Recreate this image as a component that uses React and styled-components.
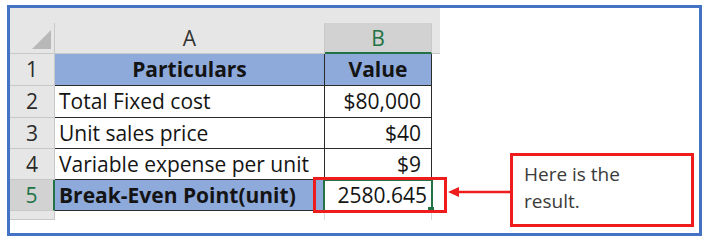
import React from "react";
import styled, { createGlobalStyle } from "styled-components";

const GREEN = "#217346";
const HEAD = "#e6e6e6";
const HEAD_SEL = "#d2d2d2";
const HEAD_LINE = "#c8c8c8";
const GRID_DARK = "#2b2b2b";
const INK = "#141414";
const BLUE_FILL = "#8eaadb";
const RED = "#ee1c1c";
const FRAME_BLUE = "#4472c4";

const Global = createGlobalStyle`
  html, body { margin: 0; padding: 0; background: #fff; }
  body { font-family: "Open Sans", "Liberation Sans", sans-serif; }
  *, *::before, *::after { box-sizing: border-box; }
`;

const Frame = styled.div`
  margin: 5px 0 0 7px;
  width: 695px;
  height: 231px;
  border: 3px solid ${FRAME_BLUE};
  display: flex;
  align-items: flex-start;
`;

const Sheet = styled.div`
  display: grid;
  grid-template-columns: 45px 270px 107px 8px;
  grid-template-rows: 15px 31px 32px 32px 31px 31px 31px 9px;
  font-size: 21px;
  line-height: 1;
`;

const TopStrip = styled.div`
  grid-column: 1 / -1;
  background: ${HEAD};
`;

const Corner = styled.div`
  background: ${HEAD};
  border-right: 1px solid ${HEAD_LINE};
  border-bottom: 1px solid ${HEAD_LINE};
  display: flex;
  justify-content: flex-end;
  align-items: flex-end;
  padding: 0 3px 4px 0;
`;

const ColHeader = styled.div`
  background: ${(p) => (p.$selected ? HEAD_SEL : HEAD)};
  color: ${(p) => (p.$selected ? GREEN : "#333")};
  border-right: 1px solid ${HEAD_LINE};
  border-bottom: ${(p) => (p.$selected ? `2px solid ${GREEN}` : `1px solid ${HEAD_LINE}`)};
  display: flex;
  align-items: center;
  justify-content: center;
  padding-top: ${(p) => (p.$selected ? "1px" : "0")};
`;

const HeaderFiller = styled.div`
  background: ${HEAD};
  border-bottom: 1px solid ${HEAD_LINE};
`;

const RowHeader = styled.div`
  background: ${(p) => (p.$selected ? HEAD_SEL : HEAD)};
  color: ${(p) => (p.$selected ? GREEN : "#2a2a2a")};
  border-right: ${(p) => (p.$selected ? `2px solid ${GREEN}` : `1px solid ${HEAD_LINE}`)};
  border-bottom: 1px solid ${HEAD_LINE};
  display: flex;
  align-items: center;
  justify-content: center;
`;

const Cell = styled.div`
  position: relative;
  display: flex;
  align-items: center;
  justify-content: ${(p) =>
    p.$align === "center" ? "center" : p.$align === "right" ? "flex-end" : "flex-start"};
  padding: 0 ${(p) => p.$padRight}px 0 4px;
  background: ${(p) => (p.$fill ? BLUE_FILL : "#fff")};
  font-weight: ${(p) => (p.$bold ? 700 : 400)};
  color: ${INK};
  border-right: 1px solid ${GRID_DARK};
  border-bottom: 1px solid ${GRID_DARK};
  white-space: nowrap;
`;

const EmptyCell = styled.div`
  background: #fff;
  border-right: ${(p) => (p.$line ? "1px solid #d9d9d9" : "none")};
`;

const Selection = styled.div`
  position: absolute;
  top: -1px;
  left: -2px;
  right: -2px;
  bottom: -2px;
  border: 2px solid ${GREEN};
  pointer-events: none;
`;

const FillHandle = styled.div`
  position: absolute;
  right: -3px;
  bottom: -2px;
  width: 6px;
  height: 5px;
  background: ${GREEN};
`;

const Highlight = styled.div`
  position: absolute;
  top: -3px;
  left: -12px;
  right: -16px;
  bottom: -3px;
  border: 3px solid ${RED};
  pointer-events: none;
`;

const Annotation = styled.div`
  margin: 145px 0 0 8px;
  display: flex;
  align-items: center;
`;

const Arrow = styled.svg`
  display: block;
  margin-top: 4px;
`;

const Callout = styled.div`
  width: 184px;
  height: 74px;
  border: 3px solid ${RED};
  padding: 5px 0 0 11px;
  font-size: 19px;
  line-height: 27px;
  color: #3a3a3a;
`;

const rows = [
  { n: 1, a: "Particulars", b: "Value", title: true },
  { n: 2, a: "Total Fixed cost", b: "$80,000" },
  { n: 3, a: "Unit sales price", b: "$40" },
  { n: 4, a: "Variable expense per unit", b: "$9" },
  { n: 5, a: "Break-Even Point(unit)", b: "2580.645", result: true },
];

export default function App() {
  return (
    <>
      <Global />
      <Frame>
        <Sheet>
          <TopStrip />
          <Corner>
            <svg width="19" height="19" viewBox="0 0 19 19">
              <polygon points="19,0 19,19 0,19" fill="#b8b8b8" />
            </svg>
          </Corner>
          <ColHeader>A</ColHeader>
          <ColHeader $selected>B</ColHeader>
          <HeaderFiller />
          {rows.map((r) => (
            <React.Fragment key={r.n}>
              <RowHeader $selected={r.result}>{r.n}</RowHeader>
              <Cell
                $fill={r.title || r.result}
                $bold={r.title || r.result}
                $align={r.title ? "center" : "left"}
                $padRight={4}
              >
                {r.a}
              </Cell>
              <Cell
                $fill={r.title}
                $bold={r.title}
                $align={r.title ? "center" : "right"}
                $padRight={r.title ? 4 : r.result ? 4 : 10}
              >
                {r.b}
                {r.result && (
                  <>
                    <Selection />
                    <FillHandle />
                    <Highlight />
                  </>
                )}
              </Cell>
              <EmptyCell />
            </React.Fragment>
          ))}
          <RowHeader />
          <EmptyCell $line />
          <EmptyCell $line />
          <EmptyCell />
        </Sheet>
        <Annotation>
          <Arrow width="62" height="12" viewBox="0 0 62 12">
            <line x1="9" y1="6" x2="62" y2="6" stroke={RED} strokeWidth="2.5" />
            <polygon points="0,6 11,1 11,11" fill={RED} />
          </Arrow>
          <Callout>
            Here is the
            <br />
            result.
          </Callout>
        </Annotation>
      </Frame>
    </>
  );
}
